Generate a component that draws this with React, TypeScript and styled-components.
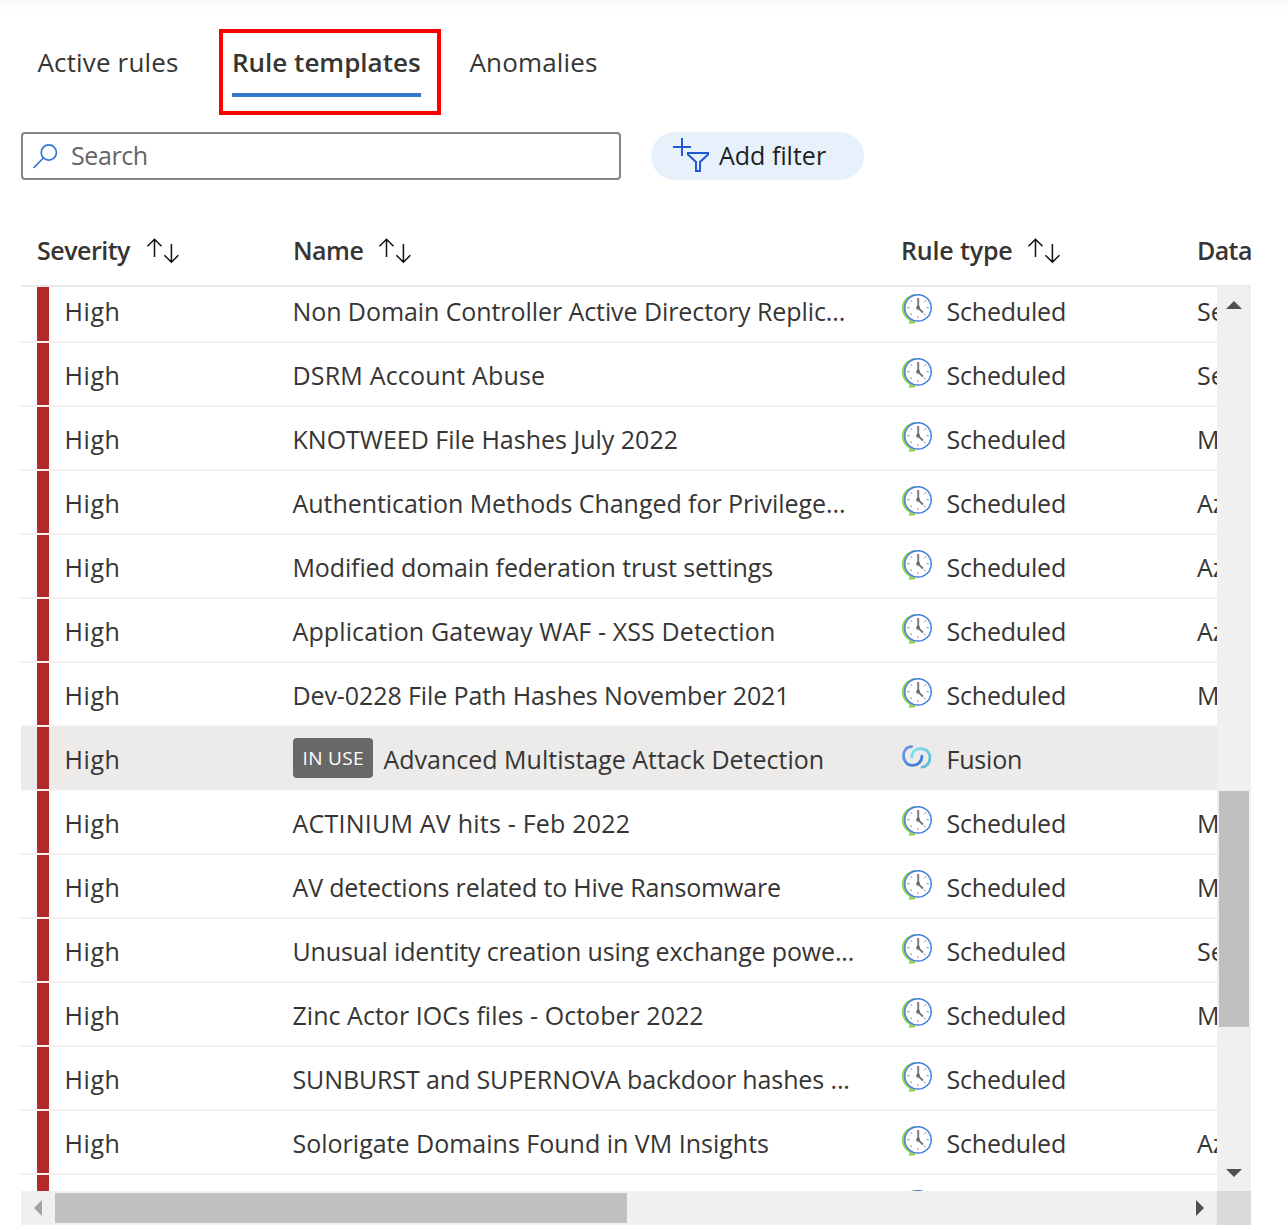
import React from 'react';
import styled, { createGlobalStyle } from 'styled-components';

const GlobalStyle = createGlobalStyle`
  *, *::before, *::after { box-sizing: border-box; }
  body {
    margin: 0;
    background: #fff;
    color: #363534;
    font-family: "Open Sans", "Noto Sans", sans-serif;
    font-size: 25px;
  }
`;

const Page = styled.main`
  width: 1288px;
  height: 1230px;
  overflow: hidden;
  padding: 29px 37px 0 21px;
  background: linear-gradient(#fafafa, #fff 14px);
`;

const Text = styled.span<{ $spacing?: number }>`
  white-space: nowrap;
  letter-spacing: ${p => p.$spacing ?? 0}px;
`;

const Tabs = styled.nav`
  display: flex;
  height: 86px;
  font-size: 26px;
`;

const Tab = styled.div<{ $width: number; $inset: number }>`
  width: ${p => p.$width}px;
  padding: 8px 0 0 ${p => p.$inset}px;
  line-height: 50px;
`;

const HighlightedTab = styled.div`
  width: 222px;
  height: 86px;
  border: 4px solid #fe0000;
  padding: 4px 16px 0 9px;
  line-height: 50px;
  font-weight: 600;
`;

const TabUnderline = styled.div`
  height: 4px;
  margin-top: 6px;
  background: #3477cf;
`;

const Toolbar = styled.div`
  display: flex;
  gap: 30px;
  height: 48px;
  margin-top: 17px;
`;

const SearchBox = styled.div`
  display: flex;
  align-items: center;
  gap: 12px;
  width: 600px;
  padding: 0 10px;
  border: 2px solid #868584;
  border-radius: 4px;
  color: #666564;
  line-height: 44px;

  span { padding-bottom: 2px; }
`;

const FilterButton = styled.button`
  display: flex;
  align-items: center;
  gap: 10px;
  width: 213px;
  padding: 0 0 0 22px;
  border: 0;
  border-radius: 24px;
  background: #e6f1fb;
  color: #201f1e;
  font: inherit;
  line-height: 46px;

  span { padding-bottom: 2px; }
`;

const Table = styled.section`
  width: 1230px;
  margin-top: 32px;
`;

const columns = '256px 608px 296px 1fr';

const HeaderRow = styled.div`
  display: grid;
  grid-template-columns: ${columns};
  height: 75px;
  padding-left: 16px;
  border-bottom: 2px solid #eaeaea;
  font-weight: 600;
  line-height: 76px;
`;

const HeaderCell = styled.div<{ $label: number }>`
  display: grid;
  grid-template-columns: ${p => p.$label}px 34px;
  align-items: center;

  svg { margin-top: 1px; }
`;

const Body = styled.div`
  display: grid;
  grid-template-columns: 1196px 34px;
  grid-template-rows: 904px 34px;
`;

const Rows = styled.div`
  overflow: hidden;
  padding-bottom: 8px;
`;

const RowStack = styled.div`
  margin-top: -8px;
`;

const Row = styled.div<{ $selected?: boolean }>`
  display: grid;
  grid-template-columns: 16px 12px 236px 608px 296px 1fr;
  height: 64px;
  border-bottom: 2px solid #f1f1f1;
  background: ${p => (p.$selected ? '#ecebe9' : 'transparent')};
  background-clip: padding-box;
`;

const SeverityBar = styled.div`
  grid-column: 2;
  background: #b32828;
`;

const Cell = styled.div<{ $indent: number }>`
  display: flex;
  align-items: center;
  min-width: 0;
  overflow: hidden;
  padding: 1px 0 0 ${p => p.$indent}px;
  line-height: 40px;
`;

const InUse = styled.span`
  width: 80px;
  height: 40px;
  margin: 0 10.5px 1px 0.5px;
  padding-left: 9.5px;
  border-radius: 4px;
  background: #686868;
  color: #fff;
  font-size: 19px;
  line-height: 41px;
  letter-spacing: 0.35px;
  white-space: nowrap;
`;

const TypeIcon = styled.span`
  display: flex;
  justify-content: center;
  width: 30px;
  margin: 0 14.5px 3px 1px;
`;

const ScrollY = styled.div`
  display: flex;
  flex-direction: column;
  align-items: center;
  justify-content: space-between;
  padding: 14px 0;
  background: #f0f0f0;
`;

const ThumbY = styled.div`
  width: 30px;
  height: 236px;
  margin: 482px 0 142px;
  background: #c0c0c0;
`;

const ScrollX = styled.div`
  display: flex;
  align-items: center;
  padding: 0 13px;
  background: #f0f0f0;
`;

const ThumbX = styled.div`
  width: 572px;
  height: 30px;
  margin: 0 auto 0 13px;
  background: #c0c0c0;
`;

const Corner = styled.div`
  background: #dadada;
`;

const SearchIcon = () => (
  <svg width="26" height="26" viewBox="0 0 26 26" fill="none" stroke="#3477cf" strokeWidth="1.7">
    <circle cx="15.8" cy="9.5" r="7.6" />
    <path d="M10.4 15 .6 24.8" />
  </svg>
);

const AddFilterIcon = () => (
  <svg width="36" height="36" viewBox="0 0 36 36" fill="none" stroke="#2159d2" strokeWidth="2">
    <path d="M9 0v18M0 9h18" />
    <path d="M15 15h20v1.6L27 24v9h-4v-9l-8-7.4z" />
  </svg>
);

const SortIcon = () => (
  <svg width="34" height="26" viewBox="0 0 34 26" fill="none" stroke="#111" strokeWidth="1.5">
    <path d="M8.5 19V1.5M1.5 8.3l7-7 7 7M25.4 6v18M18.4 17.2l7 7 7-7" />
  </svg>
);

const ScheduledIcon = () => (
  <svg width="30" height="30" viewBox="0 0 30 30" fill="none">
    <path d="M13 0C5 1 0 7 0 14c0 6 3 10 7.500 12.500L6.800 29.800 13.500 29.300 12 24.500z" fill="#92d24c" />
    <circle cx="16" cy="13.900" r="13.200" fill="#fff" stroke="#3e7fdc" strokeWidth="1.500" />
    <path
      d="M16 22.300v2M5.300 13.700h2.400M24.500 13.700h2.400M8.700 6.600l1.200 1.200M22.300 7.800l1.200-1.200M8.700 21l1.200-1.200M22.300 19.800l1.200 1.200"
      stroke="#a4a4a4"
      strokeWidth="1.300"
    />
    <path d="M16.200 4v10" stroke="#777" strokeWidth="1.900" />
    <path d="m16.200 13.800 4.800 4.800" stroke="#707070" strokeWidth="1.900" />
    <circle cx="16.100" cy="13.800" r="2" fill="#707070" />
  </svg>
);

const FusionIcon = () => (
  <svg width="31" height="26" viewBox="0 0 31 26" fill="none" strokeWidth="2.900" strokeLinecap="round">
    <defs>
      <linearGradient id="fusionBlue" x1="0" y1="0" x2="1" y2="1">
        <stop offset="0" stopColor="#6a9ceb" />
        <stop offset="1" stopColor="#3b78d4" />
      </linearGradient>
      <linearGradient id="fusionCyan" x1="0" y1="0" x2="1" y2="1">
        <stop offset="0" stopColor="#7fe2f2" />
        <stop offset="1" stopColor="#58b5d2" />
      </linearGradient>
    </defs>
    <path d="M10 2.200C4.500 2.200 1.600 6.700 1.600 11.700c0 5.700 4 9.900 9 9.900 6 0 10-4 10-9.600" stroke="url(#fusionBlue)" />
    <path d="M10.200 13c0-5.500 4-8.700 9-8.700 6 0 9.700 4 9.700 9.200 0 5.300-3.500 9.700-8.200 10" stroke="url(#fusionCyan)" />
  </svg>
);

const arrows = {
  up: 'M0 8 8 0l8 8z',
  down: 'M0 0h16L8 8z',
  left: 'M8 0v16L0 8z',
  right: 'M0 0l8 8-8 8z',
};

const ScrollArrow = ({ dir }: { dir: keyof typeof arrows }) => {
  const vertical = dir === 'up' || dir === 'down';
  return (
    <svg width={vertical ? 16 : 8} height={vertical ? 8 : 16} fill={dir === 'left' ? '#a3a3a3' : '#505050'}>
      <path d={arrows[dir]} />
    </svg>
  );
};

type Rule = { name: string; spacing: number; source: string; fusion?: boolean };

const rules: Rule[] = [
  { name: 'Non Domain Controller Active Directory Replic...', spacing: -0.08, source: 'Se' },
  { name: 'DSRM Account Abuse', spacing: 0.18, source: 'Se' },
  { name: 'KNOTWEED File Hashes July 2022', spacing: 0, source: 'M' },
  { name: 'Authentication Methods Changed for Privilege...', spacing: -0.05, source: 'Az' },
  { name: 'Modified domain federation trust settings', spacing: -0.13, source: 'Az' },
  { name: 'Application Gateway WAF - XSS Detection', spacing: 0.12, source: 'Az' },
  { name: 'Dev-0228 File Path Hashes November 2021', spacing: -0.1, source: 'M' },
  { name: 'Advanced Multistage Attack Detection', spacing: 0, source: '', fusion: true },
  { name: 'ACTINIUM AV hits - Feb 2022', spacing: 0.22, source: 'M' },
  { name: 'AV detections related to Hive Ransomware', spacing: -0.17, source: 'M' },
  { name: 'Unusual identity creation using exchange powe...', spacing: -0.16, source: 'Se' },
  { name: 'Zinc Actor IOCs files - October 2022', spacing: 0.03, source: 'M' },
  { name: 'SUNBURST and SUPERNOVA backdoor hashes ...', spacing: -0.12, source: '' },
  { name: 'Solorigate Domains Found in VM Insights', spacing: 0, source: 'Az' },
];

const RuleRow = ({ rule }: { rule: Rule }) => (
  <Row $selected={rule.fusion}>
    <SeverityBar />
    <Cell $indent={15.5}><Text $spacing={0.6}>High</Text></Cell>
    <Cell $indent={7.5}>
      {rule.fusion && <InUse>IN USE</InUse>}
      <Text $spacing={rule.spacing}>{rule.name}</Text>
    </Cell>
    <Cell $indent={8}>
      <TypeIcon>{rule.fusion ? <FusionIcon /> : <ScheduledIcon />}</TypeIcon>
      <Text $spacing={-0.2}>{rule.fusion ? 'Fusion' : 'Scheduled'}</Text>
    </Cell>
    <Cell $indent={8}><Text>{rule.source}</Text></Cell>
  </Row>
);

export default function App() {
  return (
    <Page>
      <GlobalStyle />
      <Tabs>
        <Tab $width={198} $inset={16.5}><Text $spacing={0.15}>Active rules</Text></Tab>
        <HighlightedTab>
          <Text $spacing={0}>Rule templates</Text>
          <TabUnderline />
        </HighlightedTab>
        <Tab $width={200} $inset={28.5}><Text $spacing={0.15}>Anomalies</Text></Tab>
      </Tabs>
      <Toolbar>
        <SearchBox><SearchIcon /><Text $spacing={-0.4}>Search</Text></SearchBox>
        <FilterButton><AddFilterIcon /><Text>Add filter</Text></FilterButton>
      </Toolbar>
      <Table>
        <HeaderRow>
          <HeaderCell $label={109}><Text $spacing={-0.5}>Severity</Text><SortIcon /></HeaderCell>
          <HeaderCell $label={85}><Text $spacing={-0.5}>Name</Text><SortIcon /></HeaderCell>
          <HeaderCell $label={126}><Text $spacing={-0.15}>Rule type</Text><SortIcon /></HeaderCell>
          <HeaderCell $label={55}><Text $spacing={-0.6}>Data</Text></HeaderCell>
        </HeaderRow>
        <Body>
          <Rows>
            <RowStack>
              {rules.map(rule => <RuleRow key={rule.name} rule={rule} />)}
              <Row>
                <SeverityBar />
                <Cell $indent={15.5} />
                <Cell $indent={7.5} />
                <Cell $indent={8}><TypeIcon><ScheduledIcon /></TypeIcon></Cell>
              </Row>
            </RowStack>
          </Rows>
          <ScrollY><ScrollArrow dir="up" /><ThumbY /><ScrollArrow dir="down" /></ScrollY>
          <ScrollX><ScrollArrow dir="left" /><ThumbX /><ScrollArrow dir="right" /></ScrollX>
          <Corner />
        </Body>
      </Table>
    </Page>
  );
}
